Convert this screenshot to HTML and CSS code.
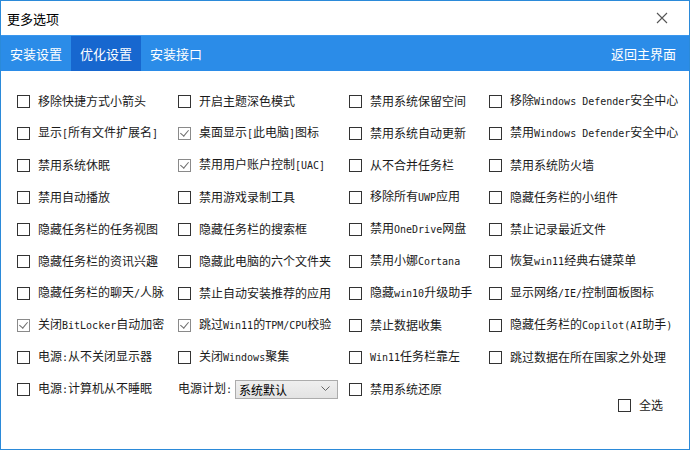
FILE: index.html
```html
<!DOCTYPE html>
<html lang="zh-CN">
<head>
<meta charset="utf-8">
<title>更多选项</title>
<link rel="stylesheet" href="styles.css">
</head>
<body>
<div class="window">
  <div class="titlebar">
    <span class="title">更多选项</span>
    <svg class="close" width="12" height="12" viewBox="0 0 12 12"><path d="M1 1L11 11M11 1L1 11" stroke="#555" stroke-width="1.1"/></svg>
  </div>
  <div class="tabbar">
    <div class="tab">安装设置</div>
    <div class="tab active">优化设置</div>
    <div class="tab">安装接口</div>
    <div class="spacer"></div>
    <div class="back">返回主界面</div>
  </div>
  <div class="content">
    <div class="grid">
      <label class="opt"><span class="cb"></span><span class="t">移除快捷方式小箭头</span></label>
      <label class="opt"><span class="cb"></span><span class="t">开启主题深色模式</span></label>
      <label class="opt"><span class="cb"></span><span class="t">禁用系统保留空间</span></label>
      <label class="opt"><span class="cb"></span><span class="t">移除<span class="lat">Windows Defender</span>安全中心</span></label>

      <label class="opt"><span class="cb"></span><span class="t">显示<span class="lat">[</span>所有文件扩展名<span class="lat">]</span></span></label>
      <label class="opt"><span class="cb on"></span><span class="t">桌面显示<span class="lat">[</span>此电脑<span class="lat">]</span>图标</span></label>
      <label class="opt"><span class="cb"></span><span class="t">禁用系统自动更新</span></label>
      <label class="opt"><span class="cb"></span><span class="t">禁用<span class="lat">Windows Defender</span>安全中心</span></label>

      <label class="opt"><span class="cb"></span><span class="t">禁用系统休眠</span></label>
      <label class="opt"><span class="cb on"></span><span class="t">禁用用户账户控制<span class="lat">[UAC]</span></span></label>
      <label class="opt"><span class="cb"></span><span class="t">从不合并任务栏</span></label>
      <label class="opt"><span class="cb"></span><span class="t">禁用系统防火墙</span></label>

      <label class="opt"><span class="cb"></span><span class="t">禁用自动播放</span></label>
      <label class="opt"><span class="cb"></span><span class="t">禁用游戏录制工具</span></label>
      <label class="opt"><span class="cb"></span><span class="t">移除所有<span class="lat">UWP</span>应用</span></label>
      <label class="opt"><span class="cb"></span><span class="t">隐藏任务栏的小组件</span></label>

      <label class="opt"><span class="cb"></span><span class="t">隐藏任务栏的任务视图</span></label>
      <label class="opt"><span class="cb"></span><span class="t">隐藏任务栏的搜索框</span></label>
      <label class="opt"><span class="cb"></span><span class="t">禁用<span class="lat">OneDrive</span>网盘</span></label>
      <label class="opt"><span class="cb"></span><span class="t">禁止记录最近文件</span></label>

      <label class="opt"><span class="cb"></span><span class="t">隐藏任务栏的资讯兴趣</span></label>
      <label class="opt"><span class="cb"></span><span class="t">隐藏此电脑的六个文件夹</span></label>
      <label class="opt"><span class="cb"></span><span class="t">禁用小娜<span class="lat">Cortana</span></span></label>
      <label class="opt"><span class="cb"></span><span class="t">恢复<span class="lat">win11</span>经典右键菜单</span></label>

      <label class="opt"><span class="cb"></span><span class="t">隐藏任务栏的聊天<span class="lat">/</span>人脉</span></label>
      <label class="opt"><span class="cb"></span><span class="t">禁止自动安装推荐的应用</span></label>
      <label class="opt"><span class="cb"></span><span class="t">隐藏<span class="lat">win10</span>升级助手</span></label>
      <label class="opt"><span class="cb"></span><span class="t">显示网络<span class="lat">/IE/</span>控制面板图标</span></label>

      <label class="opt"><span class="cb on"></span><span class="t">关闭<span class="lat">BitLocker</span>自动加密</span></label>
      <label class="opt"><span class="cb on"></span><span class="t">跳过<span class="lat">Win11</span>的<span class="lat">TPM/CPU</span>校验</span></label>
      <label class="opt"><span class="cb"></span><span class="t">禁止数据收集</span></label>
      <label class="opt"><span class="cb"></span><span class="t">隐藏任务栏的<span class="lat">Copilot(AI</span>助手<span class="lat">)</span></span></label>

      <label class="opt"><span class="cb"></span><span class="t">电源<span class="lat">:</span>从不关闭显示器</span></label>
      <label class="opt"><span class="cb"></span><span class="t">关闭<span class="lat">Windows</span>聚集</span></label>
      <label class="opt"><span class="cb"></span><span class="t"><span class="lat">Win11</span>任务栏靠左</span></label>
      <label class="opt"><span class="cb"></span><span class="t">跳过数据在所在国家之外处理</span></label>

      <label class="opt"><span class="cb"></span><span class="t">电源<span class="lat">:</span>计算机从不睡眠</span></label>
      <div class="plan"><span class="t">电源计划<span class="lat">:</span></span>
        <div class="select"><span>系统默认</span>
          <svg width="9" height="6" viewBox="0 0 9 6"><path d="M0.5 0.5L4.5 4.5L8.5 0.5" fill="none" stroke="#666" stroke-width="1"/></svg>
        </div>
      </div>
      <label class="opt"><span class="cb"></span><span class="t">禁用系统还原</span></label>
      <div></div>
    </div>
    <div class="allrow">
      <label class="opt"><span class="cb"></span><span class="t">全选</span></label>
    </div>
  </div>
</div>
</body>
</html>
```

FILE: styles.css
```css
* { box-sizing: border-box; }
html, body { margin: 0; padding: 0; background: #fff; }
body {
  font-family: "Noto Sans CJK SC", "Microsoft YaHei", sans-serif;
  font-size: 12px;
  color: #1a1a1a;
}
.window {
  width: 690px;
  height: 450px;
  border: 1px solid #2b8ad9;
  display: flex;
  flex-direction: column;
  background: #fff;
}
.titlebar {
  height: 34px;
  flex: none;
  display: flex;
  align-items: center;
  justify-content: space-between;
  padding: 0 21px 0 6px;
  background: #fff;
}
.title { font-size: 13px; color: #000; }
.tabbar {
  height: 36px;
  flex: none;
  display: flex;
  background: #2b8ce8;
  border-top: 1px solid #3a97ee;
  color: #fff;
  font-size: 13px;
}
.tab {
  width: 70px;
  display: flex;
  align-items: center;
  justify-content: center;
}
.tab.active { background: #1767cf; }
.spacer { flex: 1; }
.back {
  display: flex;
  align-items: center;
  padding-right: 13px;
}
.content {
  flex: 1;
  padding: 14px 26px 0 16px;
}
.grid {
  display: grid;
  grid-template-columns: 161px 171px 140px 1fr;
  grid-auto-rows: 32px;
}
.opt {
  display: flex;
  align-items: center;
  white-space: nowrap;
}
.t { white-space: nowrap; line-height: 16px; }
.cb {
  width: 13px;
  height: 13px;
  border: 1px solid #333;
  background: #fff;
  margin-right: 8px;
  flex: none;
  position: relative;
}
.cb.on { border-color: #8a8a8a; }
.cb.on::after {
  content: "";
  position: absolute;
  left: 3px;
  top: 0px;
  width: 4px;
  height: 7px;
  border: solid #6d6d6d;
  border-width: 0 1.4px 1.4px 0;
  transform: rotate(40deg);
}
.lat {
  font-family: "DejaVu Sans Mono", "Liberation Mono", monospace;
  font-size: 10px;
}
.plan {
  display: flex;
  align-items: center;
}
.select {
  margin-left: 3px;
  width: 103px;
  height: 19px;
  border: 1px solid #acacac;
  background: linear-gradient(#efefef, #e3e3e3);
  display: flex;
  align-items: center;
  justify-content: space-between;
  padding: 0 7px 0 3px;
  color: #000;
}
.allrow {
  display: flex;
  justify-content: flex-end;
  margin-top: -8px;
}
```
